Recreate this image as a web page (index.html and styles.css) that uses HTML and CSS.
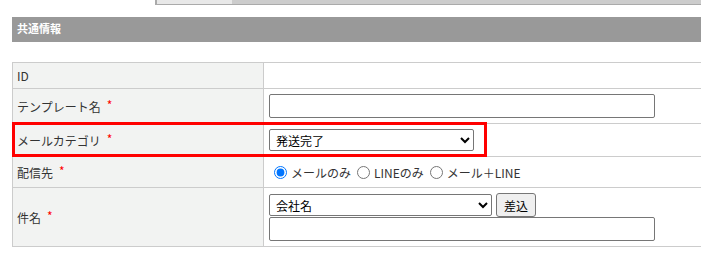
FILE: index.html
```html
<!DOCTYPE html>
<html lang="ja">
<head>
<meta charset="utf-8">
<link rel="stylesheet" href="styles.css">
</head>
<body>
<div class="topstrip"><div class="thumb"></div></div>
<div class="section-head">共通情報</div>
<div class="form-wrap">
  <table class="form">
    <tr class="r-id">
      <th>ID</th>
      <td></td>
    </tr>
    <tr class="r-name">
      <th>テンプレート名<span class="req">*</span></th>
      <td><input type="text" class="txt"></td>
    </tr>
    <tr class="r-cat">
      <th>メールカテゴリ<span class="req">*</span></th>
      <td>
        <select class="sel-cat"><option>発送完了</option></select>
      </td>
    </tr>
    <tr class="r-dest">
      <th>配信先<span class="req">*</span></th>
      <td>
        <div class="radios">
          <label class="radio"><input type="radio" name="d" checked>メールのみ</label>
          <label class="radio"><input type="radio" name="d">LINEのみ</label>
          <label class="radio"><input type="radio" name="d">メール＋LINE</label>
        </div>
      </td>
    </tr>
    <tr class="r-subj">
      <th>件名<span class="req">*</span></th>
      <td>
        <div class="insert-row">
          <select class="sel-field"><option>会社名</option></select>
          <button class="btn">差込</button>
        </div>
        <input type="text" class="txt">
      </td>
    </tr>
  </table>
  <div class="highlight"></div>
</div>
</body>
</html>
```
FILE: styles.css
```css
html, body {
  margin: 0;
  padding: 0;
  overflow: hidden;
  background: #fff;
}
body {
  font-family: "Noto Sans CJK JP", "Liberation Sans", sans-serif;
  font-size: 12px;
  color: #333;
}
.topstrip {
  margin-left: 155px;
  height: 4px;
  border-left: 2px solid #aaa;
  border-bottom: 1px solid #aaa;
  background: #ccc;
  display: flex;
}
.thumb {
  width: 75px;
  background: #e8e8e8;
}
.section-head {
  margin: 12px 0 0 12px;
  height: 25px;
  box-sizing: border-box;
  padding: 4px 0 0 5px;
  line-height: 15px;
  background: #999;
  color: #fff;
  font-size: 11px;
  font-weight: bold;
}
.form-wrap {
  position: relative;
  margin: 20px 0 0 12px;
}
.form {
  border-collapse: collapse;
  width: 720px;
}
.form th, .form td {
  border: 1px solid #ccc;
  vertical-align: middle;
  text-align: left;
  font-weight: normal;
}
.form th {
  width: 242px;
  background: #f2f3f2;
  padding: 0 4px;
  color: #333;
}
.form td {
  padding: 5px 5px;
  background: #fff;
}
.r-id th, .r-id td { height: 25px; padding-top: 0; padding-bottom: 0; }
.r-dest th, .r-dest td { height: 30px; padding-top: 0; padding-bottom: 0; }
.req {
  color: #f00;
  margin-left: 6px;
  position: relative;
  top: -2px;
}
.txt {
  display: block;
  box-sizing: border-box;
  width: 386px;
  height: 24px;
  border: 1px solid #767676;
  border-radius: 2px;
  margin: 0;
  font: inherit;
}
select {
  box-sizing: border-box;
  height: 22px;
  border: 1px solid #767676;
  border-radius: 2px;
  font: inherit;
  color: #000;
  background: #fff;
  margin: 0;
  padding: 0 2px;
}
.sel-cat {
  display: block;
  width: 205px;
}
.radios {
  display: flex;
  align-items: center;
  gap: 6px;
  padding-left: 5px;
}
.radio {
  display: inline-flex;
  align-items: center;
  gap: 4px;
  color: #333;
}
.radio input {
  margin: 0;
  width: 13px;
  height: 13px;
}
.insert-row {
  display: flex;
  align-items: center;
  gap: 4px;
  height: 24px;
}
.sel-field {
  width: 223px;
}
.btn {
  box-sizing: border-box;
  width: 40px;
  height: 24px;
  padding: 0;
  font: inherit;
  color: #000;
  background: #efefef;
  border: 1px solid #767676;
  border-radius: 3px;
}
.highlight {
  position: absolute;
  left: 0;
  top: 60px;
  width: 475px;
  height: 35px;
  box-sizing: border-box;
  border: 3px solid #f00;
  pointer-events: none;
}
```
